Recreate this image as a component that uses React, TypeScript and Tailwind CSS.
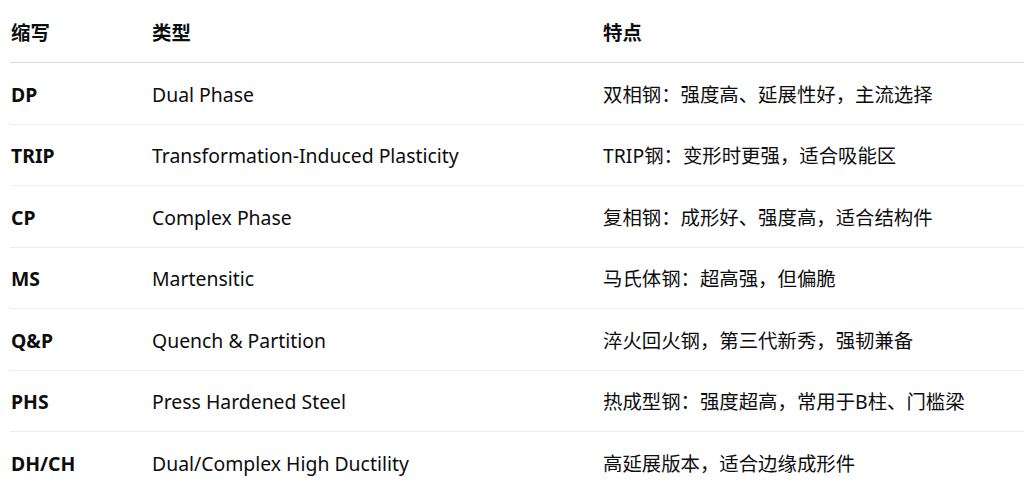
import React from 'react';

const rows = [
  { abbr: 'DP', type: 'Dual Phase', note: '双相钢：强度高、延展性好，主流选择' },
  { abbr: 'TRIP', type: 'Transformation-Induced Plasticity', note: 'TRIP钢：变形时更强，适合吸能区' },
  { abbr: 'CP', type: 'Complex Phase', note: '复相钢：成形好、强度高，适合结构件' },
  { abbr: 'MS', type: 'Martensitic', note: '马氏体钢：超高强，但偏脆' },
  { abbr: 'Q&P', type: 'Quench & Partition', note: '淬火回火钢，第三代新秀，强韧兼备' },
  { abbr: 'PHS', type: 'Press Hardened Steel', note: '热成型钢：强度超高，常用于B柱、门槛梁' },
  { abbr: 'DH/CH', type: 'Dual/Complex High Ductility', note: '高延展版本，适合边缘成形件' },
];

const font = { fontFamily: '"Segoe UI", "Noto Sans", "Noto Sans CJK SC", sans-serif' };

export default function App() {
  return (
    <div className="h-[484px] w-[1024px] overflow-hidden bg-white text-[19.4px] text-[#0d0d0d]" style={font}>
      <div className="ml-[10px]">
        {/* Header */}
        <div className="grid h-[63px] grid-cols-[141px_451px_1fr] items-center border-b border-[#d9d9d9] pt-[4px] font-bold">
          <div className="px-[1px]">缩写</div>
          <div className="px-[1px]">类型</div>
          <div className="px-[1px]">特点</div>
        </div>

        {/* Body */}
        {rows.map((r, i) => (
          <div
            key={r.abbr}
            className={`grid h-[61.5px] grid-cols-[141px_451px_1fr] items-center pt-[2px] ${i < rows.length - 1 ? 'border-b border-[#ededed]' : ''}`}
          >
            <div className="px-[1px] font-bold">{r.abbr}</div>
            <div className="px-[1px]">{r.type}</div>
            <div className="px-[1px]">{r.note}</div>
          </div>
        ))}
      </div>
    </div>
  );
}
